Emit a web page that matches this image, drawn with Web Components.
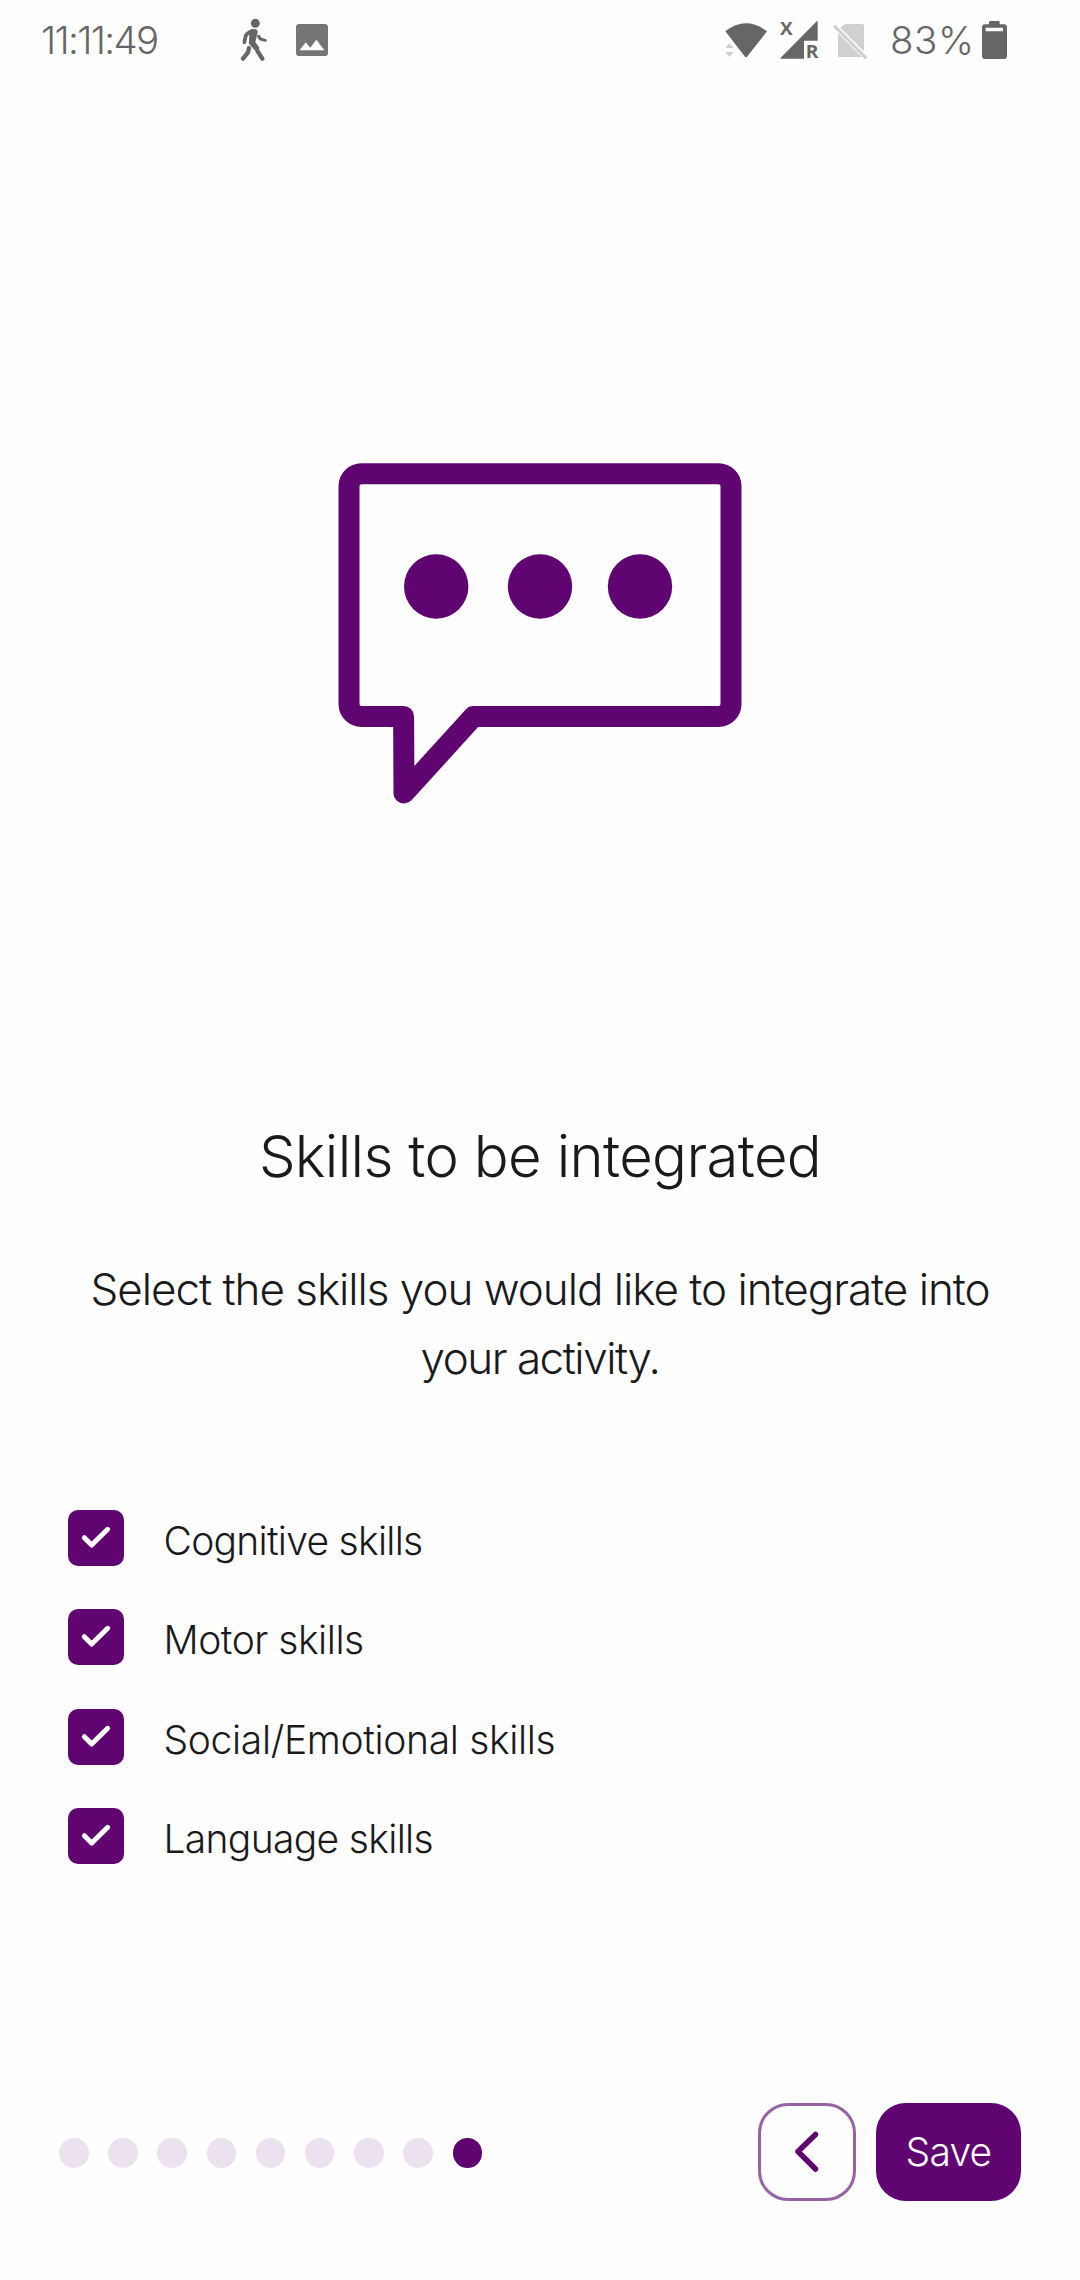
<!DOCTYPE html>
<html lang="en">
<head>
<meta charset="utf-8">
<title>Skills to be integrated</title>
<style>
html,body{margin:0;background:#fefefe}
body{font-family:Inter,"Liberation Sans",sans-serif;font-weight:300;color:#1a1a1c;--brand:#5f0470;--brand-pale:#ece1ef;--status:#666}
</style>
</head>
<body>
<skills-page></skills-page>
<script>
const define=(name,html,init)=>{
  const t=document.createElement('template');t.innerHTML=html;
  customElements.define(name,class extends HTMLElement{
    constructor(){super();this.attachShadow({mode:'open'}).append(t.content.cloneNode(true));}
    connectedCallback(){if(init)init(this,this.shadowRoot);}
  });
};

define('status-bar',`
<style>
:host{display:flex;justify-content:space-between;height:80px;padding:0 73px 0 41px;box-sizing:border-box;color:var(--status);font-size:38.5px;line-height:80px;white-space:nowrap}
.side{display:flex}
.time{width:197px;letter-spacing:-1.65px}
.pct{width:92px;padding-left:22px;letter-spacing:.57px}
.picture{margin-left:26px}
svg{display:block;height:80px;fill:currentColor}
.pale{fill:#d0d0d0}
.round{fill:none;stroke:currentColor;stroke-linecap:round;stroke-linejoin:round}
text{font:700 55px "Open Sans","Noto Sans",sans-serif}
</style>
<div class="side">
  <span class="time">11:11:49</span>
  <svg width="32" viewBox="654 0 96 240">
    <circle cx="706" cy="70" r="13.5"/>
    <path class="round" stroke-width="11" d="M673 127L677 108Q679 101 696 93"/>
    <path d="M688 92Q702 83 712 91Q714 94 712 101L706 127Q716 138 719 146L704 149L687 134Q686 132 687 127Z"/>
    <path class="round" stroke-width="13" d="M697 133L711 151L727 176M687 144L684 157L669 176"/>
    <path class="round" stroke-width="9" d="M716 109L721 117L736 121"/>
    <path d="M683 129L706 154" stroke="#fefefe" stroke-width="3" fill="none"/>
  </svg>
  <svg class="picture" width="32" viewBox="828 0 96 240">
    <rect x="828" y="72" width="96" height="96" rx="10" fill="#757575"/>
    <path fill="#fefefe" d="M839 151L857 127L871 143L889 119L913 151Z"/>
  </svg>
</div>
<div class="side">
  <svg width="144" viewBox="72 0 432 240">
    <path d="M76 94Q138 46 201 94L141 170Q138 173 135 170Z"/>
    <path class="pale" d="M76 144L88 130L101 144ZM76 156H101L88 171Z"/>
    <path d="M351 63Q353 62 353 65V122H312V176H243Q239 176 242 173Z"/>
    <text x="240" y="104" textLength="38" lengthAdjust="spacingAndGlyphs">X</text>
    <text x="317" y="175" textLength="38" lengthAdjust="spacingAndGlyphs">R</text>
    <path class="pale" d="M421 84L432 74Q434 72 438 72H487Q492 72 492 77V154ZM414 97L488 171H419Q414 171 414 166Z"/>
    <path d="M399 74L501 177" stroke="#fefefe" stroke-width="14" fill="none"/>
    <path d="M402 77L499 175" stroke="#d0d0d0" stroke-width="9" fill="none"/>
  </svg>
  <span class="pct">83%</span>
  <svg width="25" viewBox="846 0 75 240">
    <path fill-rule="evenodd" d="M867 73V66Q867 63 870 63H896Q899 63 899 66V73H912Q921 73 921 82V168Q921 177 912 177H855Q846 177 846 168V82Q846 73 855 73ZM857 83V94H909V83Z"/>
  </svg>
</div>`);

define('speech-bubble',`
<style>:host{display:block;width:404px;height:344px}svg{display:block}</style>
<svg width="404" height="344" viewBox="338 462 404 344">
  <path fill="none" stroke="var(--brand)" stroke-width="21" stroke-linejoin="round" d="M361.5 473.7H718.5A12.5 12.5 0 0 1 731 486V704A12.5 12.5 0 0 1 718.5 716.5H473.5L404 793L403.6 716.5H361.5A12.5 12.5 0 0 1 349 704V486A12.5 12.5 0 0 1 361.5 473.7Z"/>
  <g fill="var(--brand)"><circle cx="436.2" cy="586.5" r="32.2"/><circle cx="540" cy="586.5" r="32.2"/><circle cx="640" cy="586.5" r="32.2"/></g>
</svg>`);

define('skill-option',`
<style>
:host{display:flex;height:56px;gap:39.5px;font-size:39px;line-height:62px;white-space:nowrap}
svg{display:block;flex:none}
span{letter-spacing:var(--track,0)}
</style>
<svg width="56" height="56" viewBox="0 0 168 168"><rect width="168" height="168" rx="30" fill="var(--brand)"/><path d="M49 83L71 105L119 58" fill="none" stroke="#fff" stroke-width="15" stroke-linecap="round" stroke-linejoin="round"/></svg>
<span><slot></slot></span>`);

define('step-dots',`
<style>
:host{display:flex;width:423px;justify-content:space-between}
i{width:29.5px;height:30px;border-radius:50%;background:var(--brand-pale)}
i.on{background:var(--brand)}
</style>`,(el,root)=>{
  const n=+el.getAttribute('count'),a=+el.getAttribute('active');
  for(let k=1;k<=n;k++){const i=document.createElement('i');if(k===a)i.className='on';root.append(i);}
});

define('action-button',`
<style>
:host{display:block}
button{all:unset;box-sizing:border-box;display:flex;align-items:center;justify-content:center;width:145px;height:98px;border-radius:30px;background:var(--brand);color:#fefefe;font-size:39px;letter-spacing:-.79px;line-height:100px}
:host([kind=back]) button{width:98px;background:#fefefe;border:3px solid #9763a4}
</style>
<button><slot></slot></button>`);

define('skills-page',`
<style>
:host{display:flex;flex-direction:column;width:1080px;height:2280px;background:#fefefe;overflow:hidden}
speech-bubble{margin:382px auto 0}
h1{margin:310px 0 0;font-size:58px;font-weight:300;line-height:80px;text-align:center;letter-spacing:-.67px}
p{margin:58.5px 0 0;font-size:44px;line-height:69px;text-align:center;letter-spacing:-1.03px}
p span{display:block;white-space:nowrap}
p span+span{letter-spacing:-1.48px}
.list{display:flex;flex-direction:column;gap:43.3px;margin:117.5px 0 0 68px}
footer{display:flex;align-items:center;margin:239px 59px 0}
step-dots{padding-top:2px}
.buttons{display:flex;gap:20px;margin-left:auto}
.chev{display:block}
</style>
<status-bar></status-bar>
<speech-bubble></speech-bubble>
<h1>Skills to be integrated</h1>
<p><span>Select the skills you would like to integrate into</span><span>your activity.</span></p>
<div class="list">
  <skill-option style="--track:-.72px">Cognitive skills</skill-option>
  <skill-option style="--track:-.47px">Motor skills</skill-option>
  <skill-option style="--track:-.34px">Social/Emotional skills</skill-option>
  <skill-option style="--track:-.67px">Language skills</skill-option>
</div>
<footer>
  <step-dots count="9" active="9"></step-dots>
  <div class="buttons">
    <action-button kind="back"><svg class="chev" width="40" height="50" viewBox="0 0 40 50"><path d="M28.5 7.500L11 24.500L28.500 42" fill="none" stroke="var(--brand)" stroke-width="5.5" stroke-linecap="round" stroke-linejoin="round"/></svg></action-button>
    <action-button>Save</action-button>
  </div>
</footer>`);
</script>
</body>
</html>
